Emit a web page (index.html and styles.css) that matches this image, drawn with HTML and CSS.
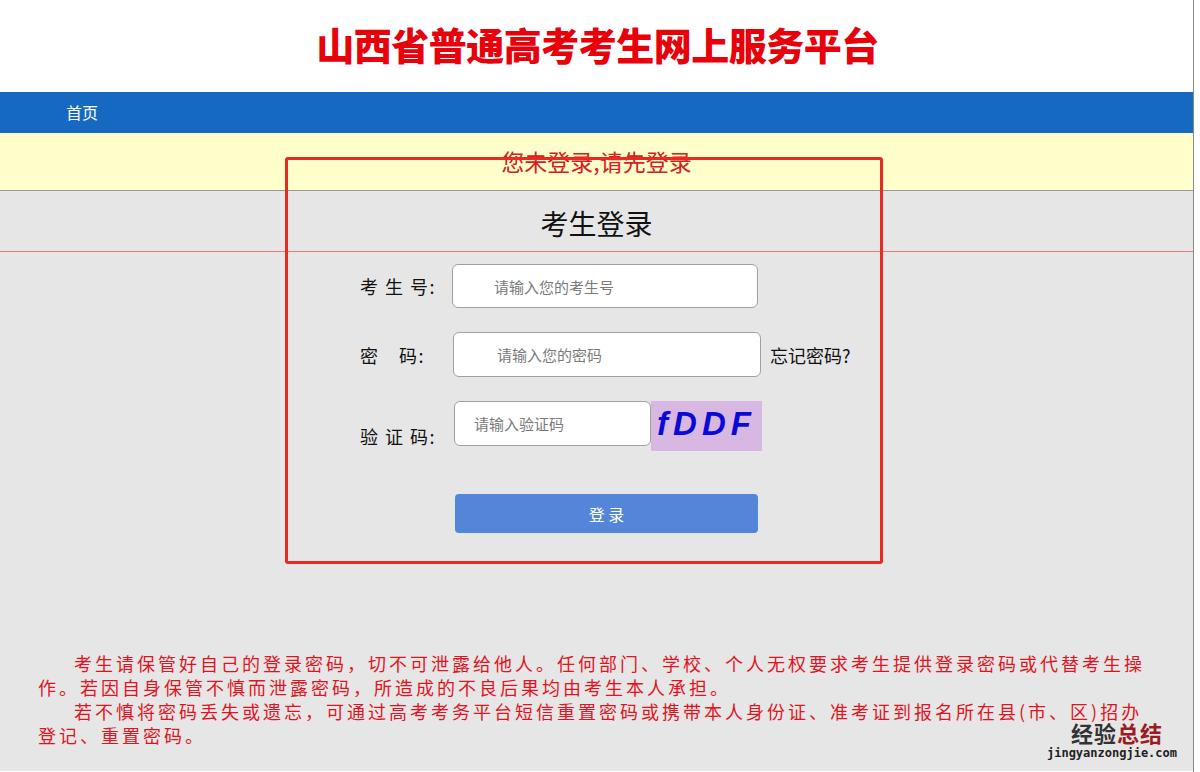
FILE: index.html
```html
<!DOCTYPE html>
<html lang="zh-CN">
<head>
  <meta charset="UTF-8" />
  <title>山西省普通高考考生网上服务平台</title>
  <link rel="stylesheet" href="styles.css">
</head>
<body>
  <div class="page">
    <!-- Header -->
    <header class="top">
      <h1>山西省普通高考考生网上服务平台</h1>
    </header>

    <nav class="nav">
      <a href="#">首页</a>
    </nav>

    <div class="notice">您未登录,请先登录</div>

    <main class="main">
      <h2 class="login-title">考生登录</h2>

      <form class="login-form">
        <div class="row">
          <label class="lbl lbl-1" for="ksh">考 生 号:</label>
          <input class="field field-1" type="text" id="ksh" placeholder="请输入您的考生号" />
        </div>
        <div class="row">
          <label class="lbl lbl-2" for="pwd">密　码:</label>
          <input class="field field-2" type="password" id="pwd" placeholder="请输入您的密码" />
          <a class="forget" href="#">忘记密码?</a>
        </div>
        <div class="row row-code">
          <label class="lbl lbl-3" for="code">验 证 码:</label>
          <input class="field field-3" type="text" id="code" placeholder="请输入验证码" />
          <div class="captcha">fDDF</div>
        </div>
        <button type="submit" class="btn">登 录</button>
      </form>

      <div class="notes">
        <p>考生请保管好自己的登录密码，切不可泄露给他人。任何部门、学校、个人无权要求考生提供登录密码或代替考生操作。若因自身保管不慎而泄露密码，所造成的不良后果均由考生本人承担。</p>
        <p>若不慎将密码丢失或遗忘，可通过高考考务平台短信重置密码或携带本人身份证、准考证到报名所在县(市、区)招办登记、重置密码。</p>
      </div>
    </main>

    <!-- red highlight frame drawn over the login box -->
    <div class="mark"></div>

    <div class="watermark">
      <div class="wm-cn">经验<span class="wm-red">总结</span></div>
      <div class="wm-en">jingyanzongjie.com</div>
    </div>
  </div>
</body>
</html>
```

FILE: styles.css
```css
body {
  margin: 0;
  background: #fff;
  font-family: "Noto Sans CJK SC", "Noto Sans", sans-serif;
}
.page {
  position: relative;
  width: 1193px;
  height: 772px;
  border-right: 1px solid #8a8a8a;
  overflow: hidden;
}
.top {
  height: 92px;
  background: #fff;
  text-align: center;
}
.top h1 {
  margin: 0;
  padding-left: 2px;
  font-size: 38px;
  line-height: 88px;
  font-weight: 900;
  color: #e8000b;
  letter-spacing: -0.5px;
}
.nav {
  height: 41px;
  background: #1569c1;
  padding-left: 66px;
}
.nav a {
  color: #fff;
  text-decoration: none;
  font-size: 16px;
  line-height: 41px;
}
.notice {
  height: 57px;
  background: #ffffcc;
  border-bottom: 1px solid #999;
  text-align: center;
  font-size: 23px;
  line-height: 57px;
  color: #d42020;
}
.main {
  background: #e6e6e6;
  height: 580px;
}
.login-title {
  margin: 0;
  padding: 13px 0 9px;
  font-size: 28px;
  line-height: 38px;
  font-weight: normal;
  text-align: center;
  color: #111;
  border-bottom: 1px solid #ee7a7a;
}
.login-form {
  padding: 12px 0 0 360px;
}
.row {
  display: flex;
  align-items: center;
  margin-bottom: 24px;
}
.row-code {
  align-items: flex-start;
  margin-bottom: 43px;
}
.lbl {
  font-size: 18px;
  line-height: 26px;
  letter-spacing: 1.5px;
  color: #111;
}
.lbl-1 { width: 92px; }
.lbl-2 { width: 93px; }
.lbl-3 { width: 94px; margin-top: 22px; }
.field {
  box-sizing: border-box;
  height: 44px;
  border: 1px solid #a0a0a0;
  border-radius: 6px;
  background: #fff;
  font-family: "Noto Sans CJK SC", "Noto Sans", sans-serif;
  font-size: 15px;
  outline: none;
}
.field::placeholder {
  color: #7a7a7a;
}
.field-1 { width: 306px; padding-left: 41px; }
.field-2 { width: 308px; padding-left: 43px; height: 45px; }
.field-3 { width: 197px; padding-left: 19px; height: 45px; }
.forget {
  margin-left: 9px;
  font-size: 18px;
  color: #111;
  text-decoration: none;
}
.captcha {
  width: 111px;
  height: 50px;
  background: #d8b8e2;
  color: #0a0ad8;
  font-family: "Liberation Sans", Arial, sans-serif;
  font-size: 33px;
  font-weight: bold;
  font-style: italic;
  letter-spacing: 5px;
  line-height: 46px;
  text-align: center;
}
.btn {
  display: block;
  margin-left: 95px;
  width: 303px;
  height: 39px;
  border: none;
  border-radius: 4px;
  background: #5385d8;
  color: #fff;
  font-family: "Noto Sans CJK SC", "Noto Sans", sans-serif;
  font-size: 16px;
  cursor: pointer;
}
.notes {
  margin-top: 118px;
  padding-left: 38px;
  width: 1114px;
  color: #e0141e;
  font-size: 18px;
  line-height: 24px;
  letter-spacing: 3px;
}
.notes p {
  margin: 0;
  text-indent: 2em;
}
.mark {
  position: absolute;
  left: 285px;
  top: 157px;
  width: 592px;
  height: 401px;
  border: 3px solid #ea2a20;
  border-radius: 3px;
}
.watermark {
  position: absolute;
  left: 1044px;
  top: 719px;
  width: 136px;
  text-align: center;
}
.wm-cn {
  font-size: 22px;
  font-weight: bold;
  line-height: 26px;
  color: #333;
  letter-spacing: 1px;
  padding-left: 10px;
}
.wm-red {
  color: #9b1b1e;
}
.wm-en {
  font-family: "DejaVu Sans Mono", monospace;
  font-size: 12px;
  font-weight: bold;
  line-height: 16px;
  color: #222;
}
```
